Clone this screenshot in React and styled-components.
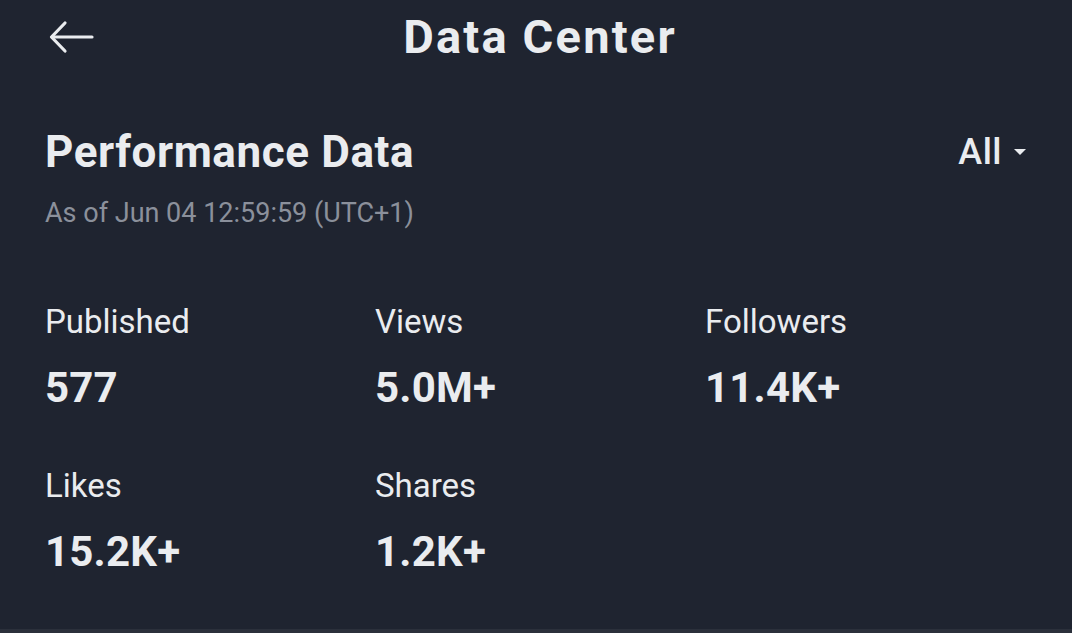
import React from 'react';
import styled, { createGlobalStyle } from 'styled-components';

const GlobalStyle = createGlobalStyle`
    html, body {
        margin: 0;
        padding: 0;
        background: #1f2430;
    }
    body {
        font-family: Roboto, "Noto Sans", "DejaVu Sans", sans-serif;
        color: #eaecef;
    }
`

const Page = styled.div`
    display: flex;
    flex-direction: column;
    height: 633px;
    background: #1f2430;
    overflow: hidden;
`

const Header = styled.header`
    position: relative;
    display: flex;
    align-items: center;
    justify-content: center;
    height: 74px;
    flex-shrink: 0;
`

const BackButton = styled.button`
    position: absolute;
    left: 48px;
    top: 50%;
    transform: translateY(-50%);
    display: flex;
    padding: 0;
    border: none;
    background: none;
    cursor: pointer;
`

const Title = styled.h1`
    margin: 0 0 0 8px;
    font-size: 47px;
    line-height: 56px;
    font-weight: 700;
    letter-spacing: 2.2px;
`

const Section = styled.section`
    flex: 1;
    padding: 52px 46px 0 45px;
`

const TitleRow = styled.div`
    display: flex;
    align-items: center;
    justify-content: space-between;
`

const SectionTitle = styled.h2`
    margin: 0;
    font-size: 44px;
    line-height: 52px;
    font-weight: 700;
    letter-spacing: 0.6px;
`

const Filter = styled.button`
    display: flex;
    align-items: center;
    gap: 12px;
    padding: 0;
    border: none;
    background: none;
    color: #eaecef;
    font-family: inherit;
    font-size: 36px;
    line-height: 52px;
    font-weight: 500;
    letter-spacing: 0.5px;
    cursor: pointer;
`

const Caret = styled.span`
    width: 0;
    height: 0;
    border-left: 6px solid transparent;
    border-right: 6px solid transparent;
    border-top: 6px solid #eaecef;
`

const Subtitle = styled.div`
    margin-top: 17px;
    font-size: 27px;
    line-height: 36px;
    color: #8b909b;
`

const Grid = styled.div`
    display: grid;
    grid-template-columns: repeat(3, 330px);
    row-gap: 53px;
    margin-top: 71px;
`

const Stat = styled.div`
    display: flex;
    flex-direction: column;
    gap: 21px;
`

const Label = styled.span`
    font-size: 33px;
    line-height: 40px;
    font-weight: 400;
    color: #eaecef;
`

const Value = styled.span`
    font-size: 42px;
    line-height: 50px;
    font-weight: 700;
    letter-spacing: 0.2px;
    color: #eaecef;
`

const Divider = styled.div`
    height: 4px;
    background: #2b303b;
    flex-shrink: 0;
`

const stats = [
    { label: 'Published', value: '577' },
    { label: 'Views', value: '5.0M+' },
    { label: 'Followers', value: '11.4K+' },
    { label: 'Likes', value: '15.2K+' },
    { label: 'Shares', value: '1.2K+' },
]

const App = () => {
    return (
        <Page>
            <GlobalStyle />
            <Header>
                <BackButton aria-label="Back">
                    <svg width="46" height="34" viewBox="0 0 46 34" fill="none" stroke="#eaecef" strokeWidth="3.2" strokeLinecap="round" strokeLinejoin="round">
                        <path d="M44 17H4" />
                        <path d="M17 3L3.5 17L17 31" />
                    </svg>
                </BackButton>
                <Title>Data Center</Title>
            </Header>
            <Section>
                <TitleRow>
                    <SectionTitle>Performance Data</SectionTitle>
                    <Filter>All<Caret /></Filter>
                </TitleRow>
                <Subtitle>As of Jun 04 12:59:59 (UTC+1)</Subtitle>
                <Grid>
                    {stats.map(s => (
                        <Stat key={s.label}>
                            <Label>{s.label}</Label>
                            <Value>{s.value}</Value>
                        </Stat>
                    ))}
                </Grid>
            </Section>
            <Divider />
        </Page>
    )
}

export default App;
